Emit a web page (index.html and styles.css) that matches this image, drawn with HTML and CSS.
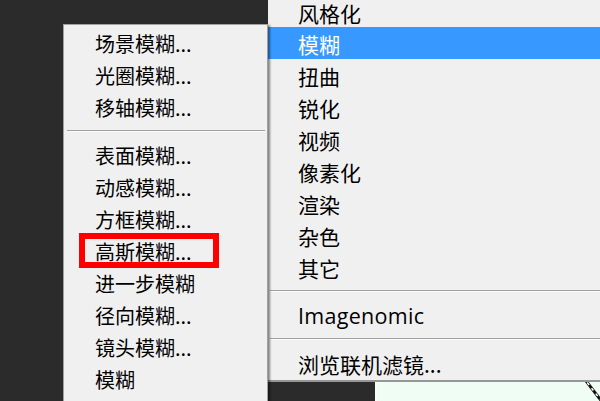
FILE: index.html
```html
<!DOCTYPE html>
<html>
<head>
<meta charset="utf-8">
<link rel="stylesheet" href="styles.css">
</head>
<body>
<div class="stage">
  <div class="canvas">
    <svg class="ants" width="225" height="20" viewBox="0 0 225 20">
      <line x1="1" y1="0" x2="1" y2="20" stroke="#ffffff" stroke-width="2" stroke-dasharray="4 4"/>
      <line x1="208" y1="-4" x2="228" y2="22" stroke="#111" stroke-width="3"/>
      <line x1="208" y1="-4" x2="228" y2="22" stroke="#fff" stroke-width="1.5" stroke-dasharray="3 4"/>
    </svg>
  </div>

  <div class="menu main">
    <div class="item first">风格化</div>
    <div class="item active">模糊</div>
    <div class="item">扭曲</div>
    <div class="item">锐化</div>
    <div class="item">视频</div>
    <div class="item">像素化</div>
    <div class="item">渲染</div>
    <div class="item">杂色</div>
    <div class="item">其它</div>
    <div class="sep"></div>
    <div class="item latin">Imagenomic</div>
    <div class="sep"></div>
    <div class="item">浏览联机滤镜...</div>
  </div>

  <div class="menu sub">
    <div class="item">场景模糊...</div>
    <div class="item">光圈模糊...</div>
    <div class="item">移轴模糊...</div>
    <div class="sep"></div>
    <div class="item">表面模糊...</div>
    <div class="item">动感模糊...</div>
    <div class="item">方框模糊...</div>
    <div class="item">高斯模糊...</div>
    <div class="item">进一步模糊</div>
    <div class="item">径向模糊...</div>
    <div class="item">镜头模糊...</div>
    <div class="item">模糊</div>
  </div>

  <div class="mark"></div>
</div>
</body>
</html>
```
FILE: styles.css
```css
html, body {
  margin: 0;
  padding: 0;
}
body {
  width: 600px;
  height: 401px;
  overflow: hidden;
  background: #2b2b2b;
  font-family: "Noto Sans CJK SC", "Noto Sans", sans-serif;
}
.stage {
  position: relative;
  width: 600px;
  height: 401px;
  overflow: hidden;
}
.canvas {
  position: absolute;
  left: 375px;
  top: 381px;
  width: 225px;
  height: 20px;
  background: #effdf5;
}
.ants {
  display: block;
}
.menu {
  position: absolute;
  background: #f0f0f0;
  box-sizing: border-box;
}
.main {
  left: 268px;
  top: 0;
  width: 340px;
  padding-bottom: 1px;
  border-bottom: 2px solid #979797;
}
.sub {
  left: 63px;
  top: 24px;
  width: 205px;
  height: 400px;
  padding-top: 2px;
  border: 1px solid #a0a0a0;
  box-shadow: 2px 1px 2px rgba(0, 0, 0, 0.45);
}
.item {
  height: 32px;
  line-height: 34px;
  font-size: 20px;
  color: #000;
  white-space: nowrap;
}
.main .item {
  padding-left: 30px;
  font-size: 21px;
}
.main .item.first {
  height: 27px;
  line-height: 27px;
}
.sub .item {
  padding-left: 31px;
}
.item.active {
  background: #3798ff;
  color: #fff;
}
.main .latin {
  font-family: "Open Sans", "Noto Sans", sans-serif;
  font-size: 21.5px;
  letter-spacing: 0.3px;
}
.sep {
  height: 16px;
  display: flex;
  align-items: center;
}
.sep::before {
  content: "";
  display: block;
  width: 100%;
  height: 1px;
  background: #a0a0a0;
  border-bottom: 1px solid #fafafa;
}
.sub .sep {
  padding: 0 2px 0 3px;
}
.main .sep {
  padding-left: 2px;
}
.mark {
  position: absolute;
  left: 79px;
  top: 233px;
  width: 140px;
  height: 35px;
  box-sizing: border-box;
  border: 6px solid #ff0000;
}
```
